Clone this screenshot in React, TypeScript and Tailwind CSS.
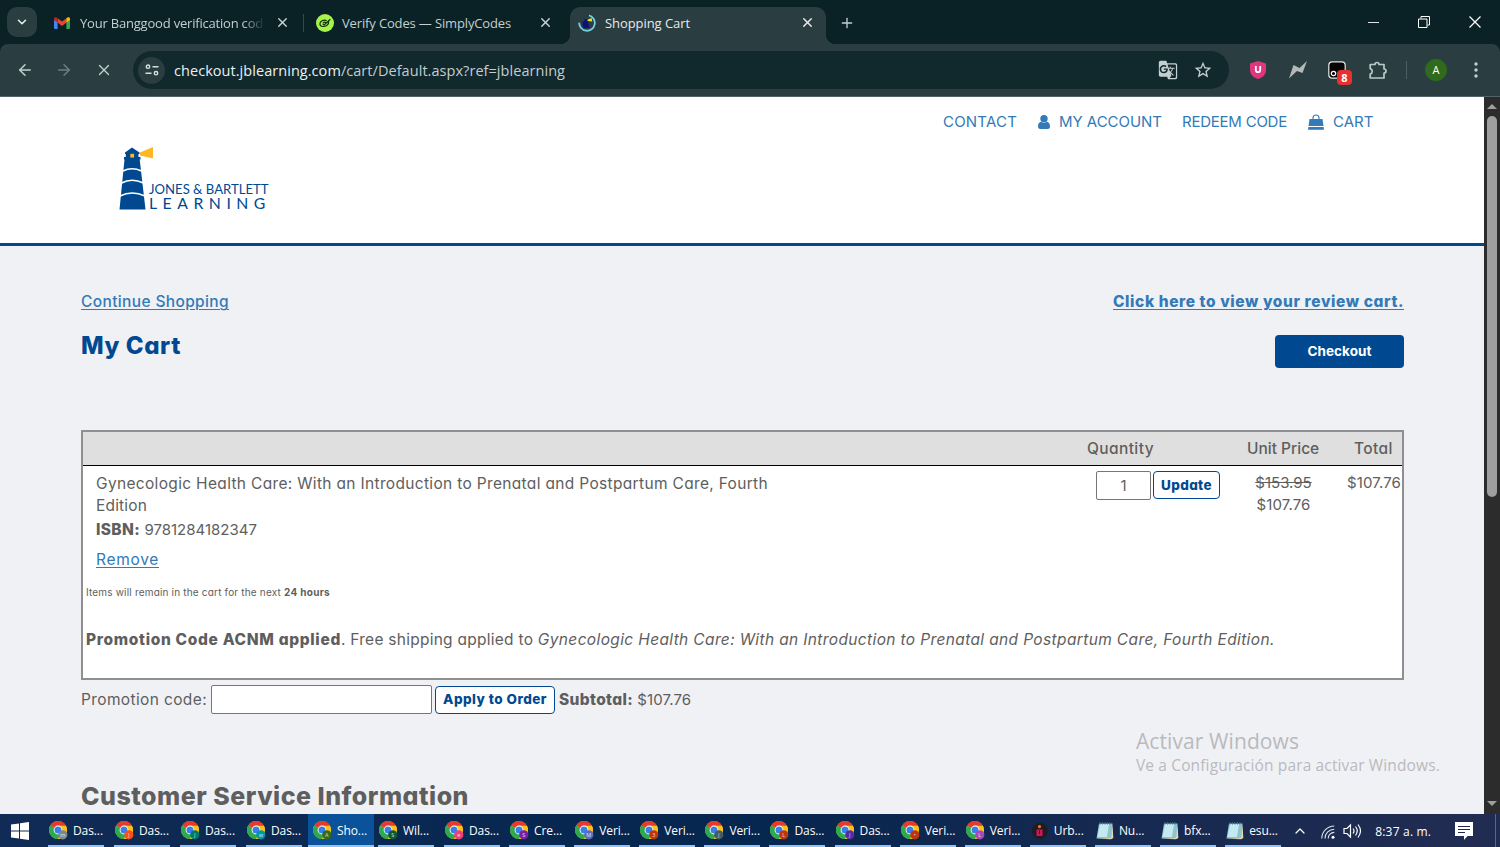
import React from 'react';
import clsx from 'clsx';
import { ArrowLeft, ArrowRight, ChevronDown, ChevronUp, Plus, X } from 'lucide-react';
import { MdGTranslate, MdStarBorder } from 'react-icons/md';

const ChromeIcon: React.FC<{ badge: string; letter: string }> = ({ badge, letter }) => (
  <svg viewBox="0 0 19 19" className="w-[19px] h-[19px] shrink-0">
    <circle cx="9" cy="9" r="9" fill="#fbc116" />
    <path d="M9 9 L1.2 4.5 A9 9 0 0 1 16.8 4.5 Z" fill="#e33b2e" />
    <path d="M9 9 L1.2 4.5 A9 9 0 0 0 9 18 L12.6 11 Z" fill="#2da94f" />
    <path d="M9 4.8 H16.9 A9 9 0 0 1 9 18 L12.8 11 Z" fill="#fbc116" />
    <circle cx="9" cy="9" r="4.4" fill="#fff" />
    <circle cx="9" cy="9" r="3.5" fill="#3c7ee8" />
    <circle cx="13.8" cy="13.8" r="4.6" fill={badge} />
    <text x="13.8" y="15.8" textAnchor="middle" fontSize="5.5" fill="#fff" fillOpacity="0.8" fontFamily="Open Sans">{letter}</text>
  </svg>
);

const NotepadIcon: React.FC = () => (
  <svg viewBox="0 0 18 19" className="w-[18px] h-[19px] shrink-0">
    <path d="M3 2.5 L16.5 2.5 L15.5 17.5 L0.5 17.5 Z" fill="#8cc5d2" />
    <path d="M4 3 L13 3 L11 16 L1.5 16 Z" fill="#c5e9f0" />
    <path d="M16.5 3 L17.3 17 L15 18.3 L1 17.8 L15 17 Z" fill="#e8dcae" />
    <path d="M4 1v2.5M6.5 1v2.5M9 1v2.5M11.5 1v2.5M14 1v2.5" stroke="#3f6e80" strokeWidth="1" />
  </svg>
);

const UrbanIcon: React.FC = () => (
  <svg viewBox="0 0 18 18" className="w-[18px] h-[18px] shrink-0">
    <circle cx="9" cy="9" r="8" fill="#201c22" />
    <circle cx="8.5" cy="4.6" r="1.6" fill="#f07a1c" />
    <path d="M5.5 7.5h6v6.5h-6z" fill="#d5135d" />
    <path d="M8 8.5h1v3.5h-1z" fill="#201c22" />
  </svg>
);

const GmailIcon: React.FC = () => (
  <svg viewBox="0 0 16 12" className="w-4 h-3 shrink-0">
    <path d="M0 1.5 L3.6 4 V12 H1.2 A1.2 1.2 0 0 1 0 10.8 Z" fill="#4285f4" />
    <path d="M16 1.5 L12.4 4 V12 H14.8 A1.2 1.2 0 0 0 16 10.8 Z" fill="#34a853" />
    <path d="M3.6 1.2 L8 4.6 L12.4 1.2 V5.6 L8 9 L3.6 5.6 Z" fill="#ea4335" />
    <path d="M12.4 1.2 C14 -0.3 16 0 16 1.8 V2.9 L12.4 5.6 Z" fill="#fbbc04" />
    <path d="M3.6 1.2 C2 -0.3 0 0 0 1.8 V2.9 L3.6 5.6 Z" fill="#c5221f" />
  </svg>
);

const SimplyCodesIcon: React.FC = () => (
  <svg viewBox="0 0 18 18" className="w-[18px] h-[18px] shrink-0">
    <circle cx="9" cy="9" r="9" fill="#a5f34c" />
    <path d="M10.6 6.6 C7.5 5.2 3.8 7.2 3.9 10 C4 13 8.6 13.2 11 11.2 C12.4 10 12.9 8.6 12.6 7.3 M6.6 9.8 L8.2 11 L14.3 5.2 M7 8.8 C8 8 9.4 8 10 8.6" fill="none" stroke="#16310d" strokeWidth="1.2" />
  </svg>
);

const LoadingIcon: React.FC = () => (
  <svg viewBox="0 0 18 18" className="w-[18px] h-[18px] shrink-0">
    <path d="M11 1.4 A7.8 7.8 0 1 1 1.2 8.6" fill="none" stroke="#74cfe6" strokeWidth="1.8" />
    <path d="M6.5 5 L9.5 5 L11.5 14 L5.5 14 Z" fill="#0b1280" />
    <path d="M4.6 7.5h5v5h-5z" fill="#0b1280" />
    <path d="M9 6 L13.6 4 L14.2 7.6 L10 7 Z" fill="#f1e418" />
  </svg>
);

const Lighthouse: React.FC = () => (
  <svg viewBox="0 0 152 64" className="w-[152px] h-16">
    <path d="M21 5.5 L34 0 V11.5 L21 8.5 Z" fill="#fdb924" />
    <path d="M13 0.5 L20.5 5.5 V7 H19.5 V10 H21.5 V12.5 H20.7 L26.5 62.5 H0.5 L5.5 12.5 H5 V10 H6.8 V7 H6 V5.5 Z" fill="#004990" />
    <rect x="11.3" y="6.8" width="3.8" height="3.8" fill="#fdb924" />
    <path d="M4 24 Q13 19.5 22.5 24" fill="none" stroke="#fff" strokeWidth="1.6" />
    <path d="M2.5 36 Q13 30.5 24.5 36" fill="none" stroke="#fff" strokeWidth="1.6" />
    <path d="M1 49 Q13 43 26 49" fill="none" stroke="#fff" strokeWidth="1.6" />
    <text x="30" y="47.3" fontSize="13.4" textLength="119.5" lengthAdjust="spacingAndGlyphs" fill="#004990" fontFamily="Lato">JONES &amp; BARTLETT</text>
    <text x="30" y="62.3" fontSize="15.8" letterSpacing="5.5" fill="#004990" fontFamily="Lato">LEARNING</text>
  </svg>
);

const taskItems = [
  { label: 'Das...', badge: '#7d8791', letter: 'm' },
  { label: 'Das...', badge: '#f4511e', letter: 'J' },
  { label: 'Das...', badge: '#00796b', letter: 'J' },
  { label: 'Das...', badge: '#0097a7', letter: 'w' },
  { label: 'Sho...', badge: '#33691e', letter: 'A', active: true },
  { label: 'Wil...', badge: '#0b5a3c', letter: 'S' },
  { label: 'Das...', badge: '#ec407a', letter: 'e' },
  { label: 'Cre...', badge: '#7b1fa2', letter: 'S' },
  { label: 'Veri...', badge: '#5c6bc0', letter: 'M' },
  { label: 'Veri...', badge: '#bf360c', letter: '3' },
  { label: 'Veri...', badge: '#455a64', letter: 'J' },
  { label: 'Das...', badge: '#bf360c', letter: 'L' },
  { label: 'Das...', badge: '#512da8', letter: 'J' },
  { label: 'Veri...', badge: '#bf360c', letter: '•' },
  { label: 'Veri...', badge: '#ab47bc', letter: 'L' },
  { label: 'Urb...', kind: 'urban' },
  { label: 'Nu...', kind: 'notepad' },
  { label: 'bfx...', kind: 'notepad' },
  { label: 'esu...', kind: 'notepad' },
];

const TabStrip: React.FC = () => (
  <div className="h-11 flex bg-[#0a2226] text-[#c3cfd1]">
    <div className="w-[30px] h-[30px] ml-[7px] mr-px mt-[7px] rounded-[10px] bg-[#2a3d40] flex items-center justify-center text-[#e4ebec]">
      <ChevronDown className="w-[14px] h-[14px]" strokeWidth={2.8} />
    </div>
    <div className="w-[265px] pl-4 pt-px flex items-center">
      <GmailIcon />
      <span className="ml-[10px] w-[185px] whitespace-nowrap text-[13px] leading-5 pt-px tracking-[-0.2px] [mask-image:linear-gradient(to_right,black_88%,transparent)]">Your Banggood verification cod</span>
      <X className="ml-[10px] w-[15px] h-[15px] shrink-0" strokeWidth={2.3} />
    </div>
    <div className="w-[267px] flex items-center pt-px">
      <div className="w-px h-[18px] bg-[#33494c]" />
      <div className="ml-3"><SimplyCodesIcon /></div>
      <span className="ml-2 w-[187px] whitespace-nowrap text-[13px] leading-5 pt-px tracking-[-0.145px]">Verify Codes — SimplyCodes</span>
      <X className="ml-[9px] w-[15px] h-[15px] shrink-0" strokeWidth={2.3} />
    </div>
    <div className="relative w-64 mt-[7px] pl-2 pb-[6px] rounded-t-[10px] bg-[#2a3d40] flex items-center text-[#e4ebec]">
      <div className="absolute -left-[10px] bottom-0 w-[10px] h-[10px] bg-[radial-gradient(circle_at_0_0,transparent_10px,#2a3d40_10.5px)]" />
      <div className="absolute -right-[10px] bottom-0 w-[10px] h-[10px] bg-[radial-gradient(circle_at_100%_0,transparent_10px,#2a3d40_10.5px)]" />
      <LoadingIcon />
      <span className="ml-[9px] w-[195px] whitespace-nowrap text-[13px] leading-5 tracking-[-0.07px]">Shopping Cart</span>
      <X className="w-[15px] h-[15px] shrink-0" strokeWidth={2.3} />
    </div>
    <div className="ml-[13px] flex items-center pt-px">
      <Plus className="w-4 h-4" strokeWidth={2} />
    </div>
    <div className="ml-auto flex items-center gap-[39px] pr-[19px] text-white">
      <div className="w-[11px] h-px bg-[#dfe5e6]" />
      <svg viewBox="0 0 12 12" className="w-3 h-3"><path d="M3 2.5V.5h8.5V9h-2M.5 3h8.5v8.5H.5z" fill="none" stroke="#fff" strokeWidth="1" /></svg>
      <svg viewBox="0 0 12 12" className="w-3 h-3"><path d="M.5.5l11 11M11.5.5l-11 11" stroke="#fff" strokeWidth="1.2" /></svg>
    </div>
  </div>
);

const Toolbar: React.FC = () => (
  <div className="h-[53px] bg-[#0a2226]">
    <div className="h-full bg-[#2a3d40] rounded-t-[8px] border-b border-[#52666a] flex items-center text-[#c3cfd1]">
      <ArrowLeft className="ml-4 w-[18px] h-[18px]" strokeWidth={2} />
      <ArrowRight className="ml-[21px] w-[18px] h-[18px] text-[#6f7f82]" strokeWidth={2} />
      <X className="ml-[22px] w-[18px] h-[18px]" strokeWidth={1.8} />
      <div className="ml-5 w-[1096px] h-[38px] rounded-full bg-[#11282c] flex items-center pl-[5px]">
        <div className="w-[27px] h-[27px] rounded-full bg-[#2a3d40] flex items-center justify-center">
          <svg viewBox="0 0 14 12" className="w-[14px] h-3">
            <path d="M7.5 2.7H13.5M.5 9.2H6.5" stroke="#d7e0e1" strokeWidth="1.5" />
            <circle cx="3" cy="2.7" r="1.7" fill="none" stroke="#d7e0e1" strokeWidth="1.4" />
            <circle cx="11" cy="9.2" r="1.7" fill="none" stroke="#d7e0e1" strokeWidth="1.4" />
          </svg>
        </div>
        <span className="ml-[9px] pt-px text-[14.5px] tracking-[0.052px] whitespace-nowrap text-[#c3cdcf]"><span className="text-[#eaf1f1]">checkout.jblearning.com</span>/cart/Default.aspx?ref=jblearning</span>
        <MdGTranslate className="ml-auto w-5 h-5" />
        <MdStarBorder className="ml-[15px] mr-4 w-5 h-5" />
      </div>
      <svg viewBox="0 0 16 18" className="ml-[21px] w-4 h-[18px]">
        <path d="M8 0L16 2.6V9c0 5-4 7.8-8 9C4 16.8 0 14 0 9V2.6Z" fill="#e0357f" />
        <path d="M5.8 5v4a2.2 2.2 0 0 0 4.4 0V5" fill="none" stroke="#fff" strokeWidth="1.8" />
      </svg>
      <svg viewBox="0 0 18 18" className="ml-[23px] w-[18px] h-[18px]"><path d="M0 17.5L4.5 4L10.5 7L18 0L13.5 12L8 10Z" fill="#b4b8b9" /></svg>
      <div className="relative ml-[21px] mr-px w-[18px] h-[18px]">
        <svg viewBox="0 0 18 18" className="w-[18px] h-[18px]">
          <rect x=".8" y=".8" width="16.4" height="16.4" rx="3.5" fill="#050505" stroke="#e8e8e8" strokeWidth="1.2" />
          <circle cx="5.5" cy="12.5" r="2.2" fill="none" stroke="#fff" strokeWidth="1.2" />
        </svg>
        <div className="absolute left-[9px] top-[9px] w-[15px] h-[15px] rounded-[4px] bg-[#e8312f] text-white text-[11px] leading-[15px] font-bold text-center">8</div>
      </div>
      <svg viewBox="0 0 19 19" className="ml-[22px] w-[19px] h-[19px]">
        <path d="M1.2 3.5H6A2 2 0 0 1 10 3.5H15V8A2 2 0 0 1 15 12V17H1.2V13A2.8 2.8 0 0 0 1.2 7.6Z" fill="none" stroke="#b9c9cb" strokeWidth="1.7" strokeLinejoin="round" />
      </svg>
      <div className="ml-[18px] w-px h-[18px] bg-[#4b6064]" />
      <div className="ml-[18px] w-[22px] h-[22px] rounded-full bg-[#2f6a1d] text-white text-[11px] leading-[22px] text-center">A</div>
      <svg viewBox="0 0 4 16" className="ml-[27px] w-1 h-4">
        <circle cx="2" cy="2" r="1.7" fill="#c3cfd1" />
        <circle cx="2" cy="8" r="1.7" fill="#c3cfd1" />
        <circle cx="2" cy="14" r="1.7" fill="#c3cfd1" />
      </svg>
    </div>
  </div>
);

const SiteHeader: React.FC = () => (
  <header className="h-[149px] bg-white border-b-[3px] border-[#004990]">
    <nav className="h-[50px] pl-[943px] flex items-center whitespace-nowrap text-[15px] text-[#337ab7]">
      <span className="w-[95px] tracking-[0.2px]">CONTACT</span>
      <svg viewBox="0 0 12 14" className="w-3 h-[14px]"><circle cx="6" cy="3.7" r="3.7" fill="#337ab7" /><path d="M0 11.5C0 8.5 1.5 7 3 6.8Q6 9 9 6.8C10.5 7 12 8.5 12 11.5Q12 14 9.5 14H2.5Q0 14 0 11.5Z" fill="#337ab7" /></svg>
      <span className="ml-[9px] w-[123px] tracking-[-0.04px]">MY ACCOUNT</span>
      <span className="w-[126px] tracking-[-0.234px]">REDEEM CODE</span>
      <svg viewBox="0 0 16 16" className="w-4 h-4"><path d="M1.5 5H14.5L15.5 12H.5ZM.4 13H15.6L16 15.8H0Z" fill="#337ab7" /><path d="M5 7V4a3 3 0 0 1 6 0V7" fill="none" stroke="#337ab7" strokeWidth="1.1" /></svg>
      <span className="ml-[9px]">CART</span>
    </nav>
    <div className="pl-[119px]"><Lighthouse /></div>
  </header>
);

const Cart: React.FC = () => (
  <main className="pl-[81px] pr-[80px] pt-[44px]">
    <div className="h-6 flex justify-between items-center whitespace-nowrap text-[15.5px] text-[#337ab7]">
      <a className="font-medium underline underline-offset-2 tracking-[0.363px]">Continue Shopping</a>
      <a className="font-extrabold underline underline-offset-2 tracking-[0.596px]">Click here to view your review cart.</a>
    </div>
    <div className="mt-[21px] h-[33px] flex justify-between">
      <h1 className="text-[24px] leading-[21px] font-extrabold text-[#004990] tracking-[0.583px]">My Cart</h1>
      <button className="w-[129px] h-[33px] rounded-[4px] bg-[#004990] text-white text-[13.5px] font-bold tracking-[0.06px]">Checkout</button>
    </div>
    <section className="mt-[62px] h-[250px] border-2 border-[#8f8f8f] bg-white whitespace-nowrap">
      <div className="h-[34px] pt-px bg-[#dfdfdf] border-b border-black flex items-center pl-[1004px] text-[15.5px] font-medium">
        <span className="w-40 tracking-[0.39px]">Quantity</span>
        <span className="w-[107px]">Unit Price</span>
        <span className="tracking-[0.4px]">Total</span>
      </div>
      <div className="h-[113px] pl-[13px] flex">
        <div className="w-[1000px] pt-[7px] text-[15.5px] leading-[22px]">
          <p className="tracking-[0.33px]">Gynecologic Health Care: With an Introduction to Prenatal and Postpartum Care, Fourth</p>
          <p className="tracking-[0.17px]">Edition</p>
          <p className="mt-[2px]"><b className="font-extrabold tracking-[0.35px]">ISBN:</b> <span className="text-[15px]">9781284182347</span></p>
          <p className="mt-2 text-[#337ab7]"><a className="underline underline-offset-2 tracking-[0.7px]">Remove</a></p>
        </div>
        <div className="pt-[5px] flex w-[146px]">
          <div className="w-[55px] h-[29px] border border-[#767676] rounded-[2px] text-center leading-7">1</div>
          <button className="ml-[2px] pt-px w-[67px] h-[28px] rounded-[4px] border border-[#004990] text-[#004990] text-[13.5px] font-extrabold tracking-[0.37px]">Update</button>
        </div>
        <div className="w-[83px] pt-[6px] text-center leading-[22px]">
          <p className="line-through">$153.95</p>
          <p className="tracking-[0.116px]">$107.76</p>
        </div>
        <div className="pt-[6px] pl-[22px] leading-[22px] tracking-[0.116px]">$107.76</div>
      </div>
      <p className="pl-[3px] mt-[6px] text-[10px] leading-[14px] tracking-[0.179px]">Items will remain in the cart for the next <b className="tracking-[0.309px]">24 hours</b></p>
      <p className="pl-[3px] mt-[30px] text-[15.5px] leading-[22px]">
        <b className="font-extrabold tracking-[0.67px]">Promotion Code ACNM applied</b>
        <span className="tracking-[0.26px]">. Free shipping applied to </span>
        <i className="tracking-[0.365px]">Gynecologic Health Care: With an Introduction to Prenatal and Postpartum Care, Fourth Edition.</i>
      </p>
    </section>
    <div className="mt-[5px] h-[29px] flex items-center whitespace-nowrap">
      <label className="w-[130px] pt-px text-[15.5px] tracking-[0.37px]">Promotion code:</label>
      <input className="w-[221px] h-[29px] bg-white border border-[#767676] rounded-[2px]" />
      <button className="ml-[3px] w-[120px] h-[28px] rounded-[4px] bg-white border border-[#004990] text-[#004990] text-[13.5px] font-extrabold tracking-[0.47px]">Apply to Order</button>
      <span className="ml-1 pt-px"><b className="text-[15.5px] font-extrabold tracking-[0.35px]">Subtotal:</b> <span className="tracking-[0.116px]">$107.76</span></span>
    </div>
    <h2 className="mt-[66px] text-[25px] leading-8 font-extrabold whitespace-nowrap tracking-[0.501px]">Customer Service Information</h2>
  </main>
);

const Taskbar: React.FC = () => (
  <div className="h-[33px] flex bg-linear-to-r from-[#102b55] via-[#05264f] to-[#222c52] text-white text-[12px]">
    <div className="w-11 pl-[11px] flex items-center">
      <svg viewBox="0 0 18 18" className="w-[18px] h-[18px]"><path d="M0 2.5L8 1.4V8.5H0ZM9 1.2L18 0V8.5H9ZM0 9.5H8V16.6L0 15.5ZM9 9.5H18V18L9 16.8Z" fill="#fff" /></svg>
    </div>
    {taskItems.map((item, i) => (
      <div key={i} className={clsx('h-full px-1 flex flex-col shrink-0', i < 6 ? 'w-[66px]' : 'w-[65.1px]', item.active && 'bg-[#0a529a]')}>
        <div className="flex-1 pl-px pt-[2px] flex items-center gap-[5px] whitespace-nowrap">
          {item.kind === 'notepad' ? <NotepadIcon /> : item.kind === 'urban' ? <UrbanIcon /> : <ChromeIcon badge={item.badge!} letter={item.letter!} />}
          <span className="pt-px tracking-[-0.1px]">{item.label}</span>
        </div>
        <div className={clsx('h-[2px] bg-[#8ec3f2]', item.active ? '-mx-1' : 'w-14')} />
      </div>
    ))}
    <ChevronUp className="ml-[6px] mt-[9px] w-4 h-4" strokeWidth={1.8} />
    <svg viewBox="0 0 14 14" className="ml-[13px] mt-[11px] w-[14px] h-[14px]"><g fill="none" stroke="#dfe4ee" strokeWidth="1.1"><path d="M.8 13.5A12.5 12.5 0 0 1 13.3 1M4 13.5A9.3 9.3 0 0 1 13.3 4.2M7.2 13.5A6 6 0 0 1 13.3 7.4" /></g><circle cx="12" cy="12.3" r="1.5" fill="#fff" /></svg>
    <svg viewBox="0 0 19 16" className="ml-[8px] mt-[9px] w-[19px] h-4"><path d="M1 5.5H4L7.5 2V14L4 10.5H1ZM10 5.5Q12 8 10 10.5M12.5 3.5Q16 8 12.5 12.5M15 1.5Q20 8 15 14.5" fill="none" stroke="#fff" strokeWidth="1.2" /></svg>
    <span className="ml-[13px] w-[80px] leading-[35px] whitespace-nowrap tracking-[0.194px]">8:37 a. m.</span>
    <svg viewBox="0 0 18 18" className="mt-2 w-[18px] h-[18px]"><path d="M0 0H18V14H12.5L9 18V14H0Z" fill="#fff" /><path d="M3 4.5H15M3 7.5H15M3 10.5H10" stroke="#1d2a55" strokeWidth="1.1" /></svg>
    <div className="ml-auto mr-1 w-px h-full bg-[#59658a]" />
  </div>
);

export default function App() {
  return (
    <div className="w-[1500px] h-[847px] overflow-hidden flex flex-col font-['Open_Sans','Noto_Sans',sans-serif]">
      <TabStrip />
      <Toolbar />
      <div className="relative h-[717px] flex overflow-hidden">
        {/* cv11 switches Inter to the single-storey "a" */}
        <div className="w-[1484px] h-full overflow-hidden bg-[#f0f1f5] text-[#5e5e5e] text-[15px] font-['Inter',sans-serif] [font-feature-settings:'cv11']">
          <SiteHeader />
          <Cart />
        </div>
        <div className="w-4 bg-[#2c2c2c] flex flex-col items-center">
          <div className="mt-[7px] border-x-[5px] border-b-[5px] border-x-transparent border-b-[#9f9f9f]" />
          <div className="mt-[7px] w-[10px] h-[381px] rounded-full bg-[#9f9f9f]" />
          <div className="mt-auto mb-[8px] border-x-[5px] border-t-[5px] border-x-transparent border-t-[#9f9f9f]" />
        </div>
        {/* Windows activation watermark */}
        <div className="absolute left-[1136px] top-[630px] text-[#b9babe] whitespace-nowrap">
          <p className="text-[21px] leading-[28px] tracking-[0.09px]">Activar Windows</p>
          <p className="text-[15.5px] leading-[21px] tracking-[0.13px]">Ve a Configuración para activar Windows.</p>
        </div>
      </div>
      <Taskbar />
    </div>
  );
}
